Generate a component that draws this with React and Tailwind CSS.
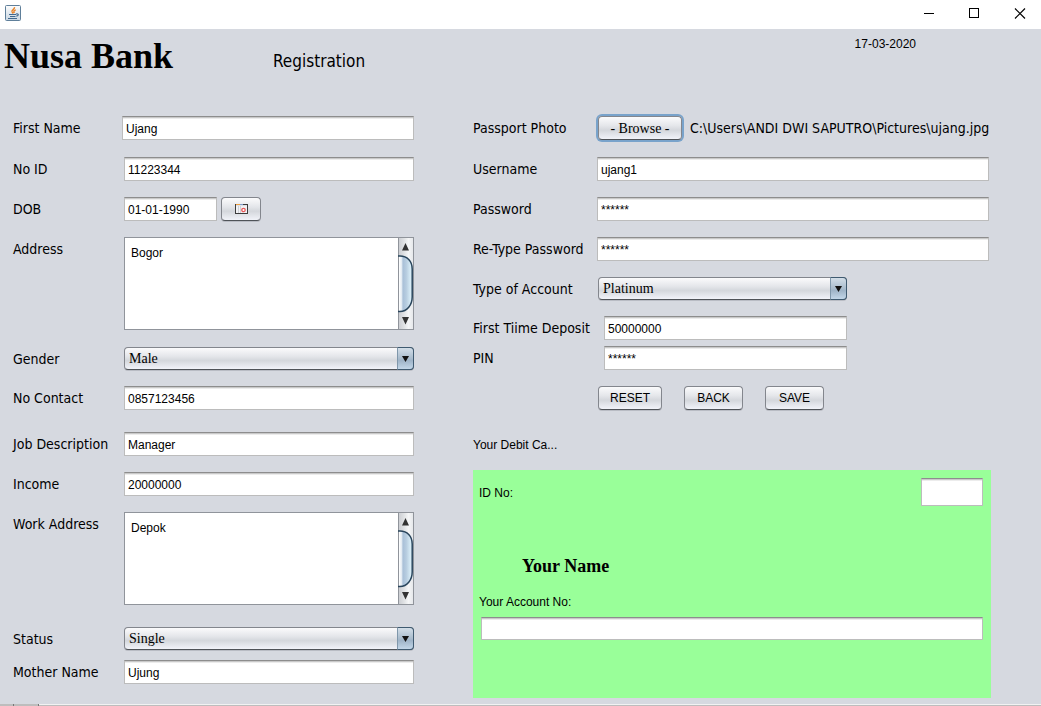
import React from "react";

const tahoma = "font-['DejaVu_Sans_Condensed','Noto_Sans',sans-serif]";
const arial = "font-['Liberation_Sans',Arial,sans-serif]";
const times = "font-['Liberation_Serif','Times_New_Roman',serif]";

const fieldBox =
  "min-w-0 bg-white border border-[#bcbcbc] border-t-[#8d8d8d] shadow-[inset_0_1px_0_#c9c9c9,inset_0_2px_0_#ececec] outline-none text-black";
const steel =
  "border border-[#83868d] border-b-[#4f5358] bg-[linear-gradient(#fbfbfc_0%,#e4e6ea_40%,#d4d7dc_60%,#f1f3f9_100%)] shadow-[0_1px_0_#b9bcc4] text-black";

function Field({ className = "", ...props }) {
  return <input className={`${fieldBox} ${arial} h-6 px-[3px] pt-px text-[12px] ${className}`} {...props} />;
}

function Row({ id, label, className = "", labelWidth = "w-[111px]", children }) {
  return (
    <div className={`flex items-start ${className}`}>
      <label htmlFor={id} className={`${tahoma} ${labelWidth} shrink-0 whitespace-nowrap text-[14px] leading-6`}>
        {label}
      </label>
      {children}
    </div>
  );
}

function Combo({ id, options, className = "" }) {
  return (
    <div className={`relative h-6 min-w-0 pb-px ${className}`}>
      <select
        id={id}
        className={`${steel} ${times} block h-full w-full appearance-none rounded-[4px] pr-5 pl-1 text-[14px] outline-none`}
      >
        {options.map((o) => (
          <option key={o}>{o}</option>
        ))}
      </select>
      <span className="pointer-events-none absolute top-0 right-0 bottom-px flex w-[17px] items-center justify-center rounded-r-[4px] border border-[#3f5a70] border-l-[#7f97ab] bg-[linear-gradient(#d3dee8_0%,#a9bccd_50%,#9fb4c8_60%,#c3d7e9_100%)]">
        <svg width="7" height="6" viewBox="0 0 7 6" aria-hidden="true">
          <path d="M0 0h7L3.5 6z" fill="#111" />
        </svg>
      </span>
    </div>
  );
}

function ScrollArea({ id, value }) {
  return (
    <div className="flex h-[93px] min-w-0 flex-1 border border-[#90949b] bg-white">
      <textarea
        id={id}
        defaultValue={value}
        className={`${arial} min-w-0 flex-1 resize-none overflow-hidden px-1.5 pt-2 text-[12px] leading-[14px] outline-none`}
      />
      <svg width="15" height="91" viewBox="0 0 15 91" className="shrink-0" aria-hidden="true">
        <defs>
          <linearGradient id={`${id}-track`}>
            <stop offset="0" stopColor="#c9cbd0" />
            <stop offset=".4" stopColor="#e0e2e4" />
            <stop offset=".7" stopColor="#f5f6f7" />
            <stop offset="1" stopColor="#e6e8eb" />
          </linearGradient>
          <linearGradient id={`${id}-thumb`}>
            <stop offset="0" stopColor="#ffffff" />
            <stop offset=".2" stopColor="#e3ebf2" />
            <stop offset=".3" stopColor="#a9c0d8" />
            <stop offset=".55" stopColor="#b7cde0" />
            <stop offset="1" stopColor="#e4f8ff" />
          </linearGradient>
        </defs>
        <rect width="15" height="91" fill={`url(#${id}-track)`} />
        <path d="M.5 0v91" stroke="#90949b" />
        <path d="M4 12.500h7L7.500 5z M4 79h7L7.500 86.500z" fill="#333" />
        <path d="M1 18h1C9 18 14.200 23 14.200 31v28C14.200 67 9 73.500 2 73.500H1z" fill={`url(#${id}-thumb)`} />
        <path d="M0 18h2C9 18 14.200 23 14.200 31v28C14.200 67 9 73.500 2 73.500H0" fill="none" stroke="#29455c" strokeWidth="1.500" />
      </svg>
    </div>
  );
}

function PushButton({ className = "", children, ...props }) {
  return (
    <button type="button" className={`${steel} flex items-center justify-center rounded-[4px] ${className}`} {...props}>
      {children}
    </button>
  );
}

function JavaIcon() {
  return (
    <svg width="16" height="16" viewBox="0 0 16 16" aria-hidden="true">
      <defs>
        <linearGradient id="java-bg" x2="0" y2="1">
          <stop offset="0" stopColor="#fdfdfd" />
          <stop offset="1" stopColor="#c9d6e2" />
        </linearGradient>
      </defs>
      <rect x=".5" y=".5" width="15" height="15" rx="1" fill="url(#java-bg)" stroke="#5f7f9a" />
      <path d="M9.500 2.200C10 4.500 6.300 4.800 7 6.800l1.200 1.700M10.800 4.800C8.500 5.500 8.700 6.500 9.300 8" fill="none" stroke="#e8842c" strokeWidth="1.400" />
      <path d="M4 9.500h7M5 11.500h5.500M3 13.500h9M11 9c3-.8 3 1.800.3 2.200" fill="none" stroke="#41698f" strokeWidth="1.200" />
    </svg>
  );
}

function CalendarIcon() {
  return (
    <svg width="13" height="10" viewBox="0 0 13 10" aria-hidden="true">
      <rect x=".5" y=".5" width="12" height="9" fill="#f1f2f5" stroke="#3c3c3c" />
      <path d="M1 .5h4" stroke="#f0a040" />
      <path d="M5 .5h3" stroke="#7f9cc8" />
      <path d="M1 1.500h11" stroke="#dfe2e8" />
      <path d="M3.500 2v7M5.500 2v7" stroke="#d0d2d6" />
      <circle cx="8.500" cy="6" r="1.700" fill="#fff" stroke="#e85a5a" strokeWidth="1.300" />
    </svg>
  );
}

export default function App() {
  return (
    <div className="flex min-h-screen flex-col bg-[#d6d9e0] text-black">
      <div className="flex h-[29px] shrink-0 items-center justify-between bg-white pr-[15px] pb-[3px] pl-[5px]">
        <JavaIcon />
        <div className="flex gap-[34px]">
          <button type="button" aria-label="Minimize">
            <svg width="12" height="11" viewBox="0 0 12 11"><path d="M1 5.500h10" stroke="#000" /></svg>
          </button>
          <button type="button" aria-label="Maximize">
            <svg width="11" height="11" viewBox="0 0 11 11"><rect x=".5" y=".5" width="9" height="9" fill="none" stroke="#000" /></svg>
          </button>
          <button type="button" aria-label="Close">
            <svg width="12" height="11" viewBox="0 0 12 11"><path d="M1 .5l10 10M11 .5l-10 10" stroke="#000" strokeWidth="1.200" /></svg>
          </button>
        </div>
      </div>

      <header className="flex h-[87px] items-start pr-[125px] pl-1">
        <h1 className={`${times} w-[269px] pt-1.5 text-[36px] leading-[42px] font-bold whitespace-nowrap`}>Nusa Bank</h1>
        <h2 className={`${tahoma} flex-1 pt-5 text-[17px] leading-6`}>Registration</h2>
        <time className={`${arial} pt-2 text-[12px] leading-[14px]`}>17-03-2020</time>
      </header>

      <main className="grid flex-1 grid-cols-[401fr_518fr] gap-x-[59px] pr-[50px] pb-1.5 pl-[13px]">
        <form className="min-w-0">
          <Row id="first" label="First Name" labelWidth="w-[109px]">
            <Field id="first" defaultValue="Ujang" className="flex-1" />
          </Row>
          <Row id="noid" label="No ID" className="mt-[17px]">
            <Field id="noid" defaultValue="11223344" className="flex-1" />
          </Row>
          <Row id="dob" label="DOB" className="mt-4">
            <Field id="dob" defaultValue="01-01-1990" className="w-[93px]" />
            <PushButton className="ml-1 h-6 w-10" aria-label="Choose date">
              <CalendarIcon />
            </PushButton>
          </Row>
          <Row id="address" label="Address" className="mt-4">
            <ScrollArea id="address" value="Bogor" />
          </Row>
          <Row id="gender" label="Gender" className="mt-[17px]">
            <Combo id="gender" options={["Male", "Female"]} className="flex-1" />
          </Row>
          <Row id="contact" label="No Contact" className="mt-[15px]">
            <Field id="contact" defaultValue="0857123456" className="flex-1" />
          </Row>
          <Row id="job" label="Job Description" className="mt-[22px]">
            <Field id="job" defaultValue="Manager" className="flex-1" />
          </Row>
          <Row id="income" label="Income" className="mt-4">
            <Field id="income" defaultValue="20000000" className="flex-1" />
          </Row>
          <Row id="work" label="Work Address" className="mt-4">
            <ScrollArea id="work" value="Depok" />
          </Row>
          <Row id="status" label="Status" className="mt-[22px]">
            <Combo id="status" options={["Single", "Married"]} className="flex-1" />
          </Row>
          <Row id="mother" label="Mother Name" className="mt-[9px]">
            <Field id="mother" defaultValue="Ujung" className="flex-1" />
          </Row>
        </form>

        <form className="flex min-w-0 flex-col">
          <Row id="photo" label="Passport Photo" labelWidth="w-[125px]">
            <PushButton id="photo" className={`${times} h-6 w-[84px] shrink-0 text-[14px] ring-2 ring-[#79a3cb]`}>
              - Browse -
            </PushButton>
            <span className={`${tahoma} ml-2 text-[14px] leading-6 whitespace-nowrap`}>
              {"C:\\Users\\ANDI DWI SAPUTRO\\Pictures\\ujang.jpg"}
            </span>
          </Row>
          <Row id="user" label="Username" labelWidth="w-[124px]" className="mt-[17px] pr-0.5">
            <Field id="user" defaultValue="ujang1" className="flex-1" />
          </Row>
          <Row id="pass" label="Password" labelWidth="w-[124px]" className="mt-4 pr-0.5">
            <Field id="pass" autoComplete="off" defaultValue="******" className="flex-1" />
          </Row>
          <Row id="repass" label="Re-Type Password" labelWidth="w-[124px]" className="mt-4 pr-0.5">
            <Field id="repass" autoComplete="off" defaultValue="******" className="flex-1" />
          </Row>
          <Row id="type" label="Type of Account" labelWidth="w-[125px]" className="mt-4">
            <Combo id="type" options={["Platinum", "Gold", "Silver"]} className="w-[249px]" />
          </Row>
          <Row id="deposit" label="First Tiime Deposit" labelWidth="w-[131px]" className="mt-[15px]">
            <Field id="deposit" defaultValue="50000000" className="w-[243px]" />
          </Row>
          <Row id="pin" label="PIN" labelWidth="w-[131px]" className="mt-1.5">
            <Field id="pin" autoComplete="off" defaultValue="******" className="w-[243px]" />
          </Row>
          <div className={`${arial} mt-4 flex gap-[22px] pl-[125px] text-[12px]`}>
            <PushButton className="h-6 w-16">RESET</PushButton>
            <PushButton className="h-6 w-[59px]">BACK</PushButton>
            <PushButton className="h-6 w-[59px]">SAVE</PushButton>
          </div>
          <p className={`${arial} mt-[27px] text-[12px] leading-4`}>Your Debit Ca...</p>

          <section className={`${arial} mt-[17px] flex-1 bg-[#99ff99] px-2 pt-2 pb-[58px] text-[12px]`}>
            <div className="-ml-0.5 flex items-start justify-between">
              <label htmlFor="card-id" className="pt-[7px] leading-4">ID No:</label>
              <input id="card-id" className={`${fieldBox} h-7 w-[62px] px-1`} />
            </div>
            <p className={`${times} mt-12 pl-[41px] text-[18px] leading-6 font-bold`}>Your Name</p>
            <label htmlFor="card-account" className="mt-4 -ml-0.5 block leading-4">Your Account No:</label>
            <input id="card-account" className={`${fieldBox} mt-[7px] block h-[23px] w-full px-1`} />
          </section>
        </form>
      </main>

      <footer className="flex h-0.5 shrink-0 bg-[#bdbdbd]">
        <span className="w-[13px]" />
        <span className="w-[26px] border-x border-[#777]" />
        <span className="flex-1 border-t border-[#f2f2f2]" />
      </footer>
    </div>
  );
}
